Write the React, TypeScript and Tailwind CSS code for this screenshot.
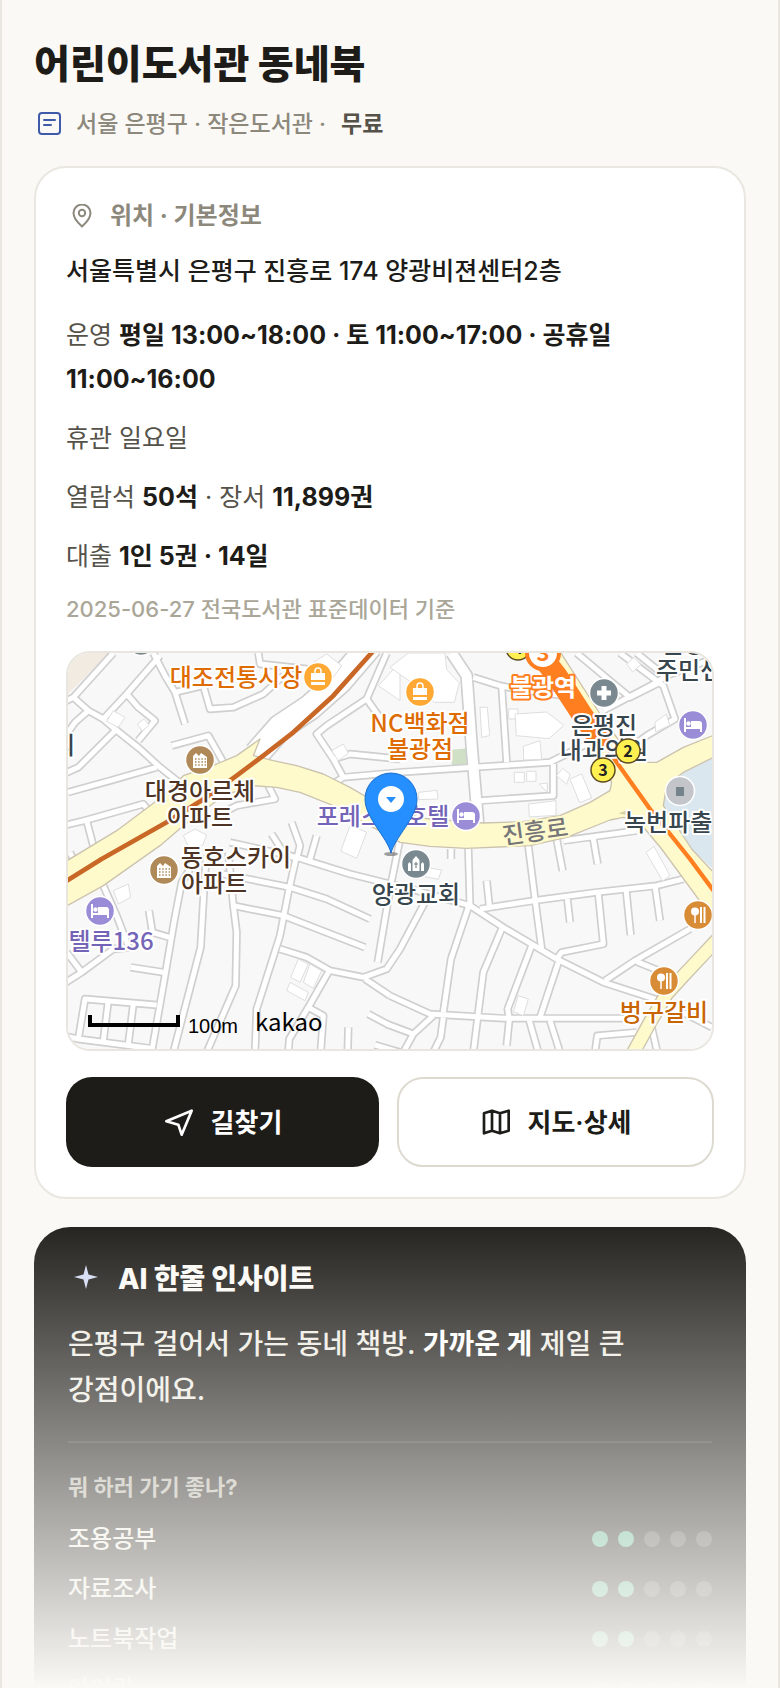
import type { ReactNode } from 'react'

type Kind = 'bag' | 'apartment' | 'hospital' | 'bed' | 'police' | 'food' | 'church' | 'plain'

interface Label {
  text: string
  x: number
  y: number
  color: string
  start?: boolean
}

// road and area geometry is on a 3x grid, see the transform in MapView
const ROADS = [
  'M40 190L70 175L190 42M70 175L115 215L160 240L195 270L270 330L330 385L400 440',
  'M40 300L75 250L115 215',
  'M160 240L230 165L330 50',
  'M40 405L85 385L195 275',
  'M230 165L265 205L315 245L265 305',
  'M310 42L345 110L375 160L405 255M375 160L460 140L480 210L550 205L640 165L700 110',
  'M54 460L180 425L320 385',
  'M365 320L475 290L520 370',
  'M40 560L110 543L280 495L315 540M110 545L135 640',
  'M1010 42L950 180L830 260L800 285L850 360L880 415M850 360L900 345L1050 360',
  'M840 440L880 415L1050 400L1270 385L1500 370L1640 300',
  'M655 440L675 480L560 500L500 530',
  'M625 42L630 75L770 90L830 130M950 180L1000 250',
  'M725 550L750 620L740 660M665 585L700 640L740 660M800 590L780 660',
  'M1270 115L1350 140L1400 150L1540 170M1355 140L1370 370',
  'M1510 375L1510 470L1290 485',
  'M1580 42L1740 175L1830 130M1710 42L1840 140L1875 240L1790 290L1720 340',
  'M1660 215L1820 130L1850 110L1986 60M1760 42L1850 115',
  'M1435 620L1455 780L1475 930M1520 600L1538 695M1630 600L1643 675M1540 605L1760 575',
  'M1255 630L1260 800M1203 630L1203 660M1310 725L1318 800',
  'M1290 810L1450 785L1640 760L1820 740L1900 720',
  'M1552 780L1560 850M1645 765L1660 915L1535 940L1520 960',
  'M1728 750L1742 888M1815 740L1830 845',
  'M1665 1025L1755 965L1920 870M1760 968L1850 1005',
  'M1255 805L1203 960L1180 1120M1355 870L1300 1000L1270 1240',
  'M1445 920L1373 1110L1378 1140L1370 1220M1525 970L1470 1135',
  'M1020 1070L1140 1125L1360 1138L1760 1138',
  'M1010 1155L1090 1185L1150 1130M1090 1185L1060 1240',
  'M1180 1135L1172 1195L1150 1240M1438 1145L1465 1240M1500 1145L1530 1240',
  'M1635 1240L1642 1190L1760 1180M1805 1165L1822 1240',
  'M535 640L550 800L560 880L557 1040L470 1240',
  'M470 650L465 700L452 925L370 1240',
  'M420 690L395 730L372 850L345 1010L305 1240',
  'M520 705L720 745L830 780L960 840',
  'M550 800L700 830L945 925',
  'M740 650L715 760L690 890L620 1110L615 1240',
  'M540 610L740 655L900 705L1100 755L1260 800L1360 865L1520 960L1660 1030L1830 1085L1986 1165',
  'M690 930L770 955L840 995L940 1015L1010 990L1050 930L1130 780',
  'M1050 600L1020 750L983 970',
  'M835 1000L775 1105L718 1200L715 1240M775 1105L820 1130L812 1240',
  'M945 1020L1020 1070M955 1125L1020 1160M895 1165L893 1240M975 1218L1050 1240',
  'M85 1200L105 1080L320 1098M40 1190L85 1200L300 1228',
  'M175 1085L160 1205M250 1095L235 1215M242 985L340 1000M297 815L307 880L358 895',
  'M40 1035L95 1000L190 930L240 925M50 940L95 1000M160 740L200 830L240 935M60 640L85 690',
]

const WIDE_ROADS = ['M1205 42L1250 110L1265 320L1285 560', 'M620 345L690 265L780 205L870 125L960 20']

const BUILDINGS = [
  'M190 215l35 20-20 30-35-18z',
  'M262 255l20-15 15 18-20 18z',
  'M400 590l35-20 35 18-12 30-40 10z',
  'M900 560l50 20-30 78-48-22z',
  'M845 335l35-20 15 28-30 22z',
  'M790 70l40-25 45 35-25 35z',
  'M985 140l65-70v115z',
  'M1020 85l55-43h110l5 50 38 40-15 58h-60l-40-40z',
  'M1290 205h22l7 85-24 5z',
  'M1376 210h28v30h-28z',
  'M1395 225l95-6 52 40-45 40-98-9z',
  'M1420 322l50-17 5 56-54 2z',
  'M1393 400h30v30h-30zM1430 397h28v30h-28z',
  'M1436 495l82-10v44l-80 5z',
  'M1560 420l35-15 30 72-36 14z',
  'M1520 410l18-22 22 18-10 30z',
  'M1468 435l24-3v28z',
  'M1106 460l55-6 3 26-58 2z',
  'M1730 75l22-20 20 22-24 22z',
  'M1815 250l34-25 10 34-42 20z',
  'M745 960l30 15-25 55-28-15z',
  'M780 975l35 20-25 53-30-18z',
  'M720 1030l55 30-10 25-55-30z',
  'M190 755l45-20 7 40-37 20z',
  'M1405 1070l30 10-15 50-30-12z',
  'M1125 685l50 8-10 28-40-8z',
  'M1788 640l24-18 48 88-22 16z',
]

const LABELS: Label[] = [
  { text: '대조전통시장', x: 168, y: 33, color: '#df6c02' },
  { text: '대경아르체', x: 132, y: 147, color: '#4e3424' },
  { text: '아파트', x: 132, y: 173, color: '#4e3424' },
  { text: '동호스카이', x: 168, y: 213, color: '#4e3424' },
  { text: '아파트', x: 146, y: 239, color: '#4e3424' },
  { text: '텔루136', x: 43, y: 297, color: '#7464b7' },
  { text: '리', x: -15, y: 101, color: '#37454d', start: true },
  { text: 'NC백화점', x: 352, y: 79, color: '#df6c02' },
  { text: '불광점', x: 352, y: 105, color: '#df6c02' },
  { text: '포레스트호텔', x: 315, y: 172, color: '#7464b7' },
  { text: '은평진', x: 536, y: 81, color: '#37454d' },
  { text: '내과의원', x: 536, y: 106, color: '#37454d' },
  { text: '불광1동', x: 594, y: 0, color: '#37454d', start: true },
  { text: '주민센터', x: 588, y: 26, color: '#37454d', start: true },
  { text: '녹번파출소', x: 556, y: 178, color: '#37454d', start: true },
  { text: '양광교회', x: 348, y: 250, color: '#37454d' },
  { text: '벙구갈비', x: 596, y: 368, color: '#c96500' },
]

const POIS: { kind: Kind; x: number; y: number }[] = [
  { kind: 'bag', x: 250, y: 24 },
  { kind: 'bag', x: 352, y: 39 },
  { kind: 'apartment', x: 132, y: 107 },
  { kind: 'apartment', x: 96, y: 217 },
  { kind: 'hospital', x: 536, y: 40 },
  { kind: 'bed', x: 625, y: 72 },
  { kind: 'bed', x: 398, y: 163 },
  { kind: 'bed', x: 32, y: 258 },
  { kind: 'police', x: 612, y: 138 },
  { kind: 'food', x: 630, y: 262 },
  { kind: 'food', x: 596, y: 328 },
  { kind: 'church', x: 348, y: 211 },
  { kind: 'plain', x: 73, y: -12 },
]

const POI_COLOR: Record<Kind, string> = {
  bag: '#ffa834',
  apartment: '#af8957',
  hospital: '#7a888f',
  bed: '#9b8cd7',
  police: '#c3c5ca',
  food: '#d98c36',
  church: '#7a888f',
  plain: '#7a888f',
}

const POI_SHAPE: Record<Kind, ReactNode> = {
  bag: (
    <>
      <path d="M-7-4H7V3H-7zM-7 5H7V8H-7z" fill="#fff" />
      <path d="M-3-4v-2a3 3 0 0 1 6 0v2" fill="none" stroke="#fff" strokeWidth="1.5" />
    </>
  ),
  apartment: (
    <>
      <path d="M-7 8V-4l3-3 3 3 2-3 3 2 3 2V8z" fill="#fff" />
      <path d="M-5-1H6M-5 2H6M-5 5H6" stroke="#af8957" strokeWidth="1.5" strokeDasharray="1.5 1.7" />
    </>
  ),
  hospital: <path d="M-2.5-7h5v4.5H7v5H2.5V7h-5V2.5H-7v-5h4.5z" fill="#fff" />,
  bed: (
    <>
      <path d="M-8-7V7M-8 3H8M8 7V0" stroke="#fff" strokeWidth="2" />
      <path d="M-2-4H6a3 3 0 0 1 3 3V3H-2z" fill="#fff" />
      <circle cx="-4.5" cy="-1.5" r="2.2" fill="#fff" />
    </>
  ),
  police: <path d="M-4-4H4V5H-4z" fill="#74838a" />,
  food: (
    <>
      <circle cx="-3" cy="-3.5" r="4" fill="#fff" />
      <path d="M-3-1V8" stroke="#fff" strokeWidth="1.5" />
      <path d="M3-8V8M6.5-8V8" stroke="#fff" strokeWidth="2" />
    </>
  ),
  church: (
    <>
      <path d="M-3.5 7V-4L0-8l3.5 4V7zM-8 7V0l1.5-2L-5 0V7zM5 7V0l1.5-2L8 0V7z" fill="#fff" />
      <path d="M0-2V4M-2 0H2" stroke="#7a888f" strokeWidth="1.2" />
    </>
  ),
  plain: null,
}

function ExitBadge({ x, y, n }: { x: number; y: number; n: number }) {
  return (
    <g transform={`translate(${x} ${y})`}>
      <circle r="12" fill="#fff052" stroke="#5d4b22" strokeWidth="1.5" />
      <text y="6" textAnchor="middle" className="text-[16px] font-bold" fill="#222">{n}</text>
    </g>
  )
}

function MapView() {
  return (
    <div className="mt-6 overflow-hidden rounded-3xl border-2 border-[#e9e6e0]">
      <svg
        viewBox="0 0 644 396"
        preserveAspectRatio="xMidYMid slice"
        className="block h-[396px] w-full bg-[#f8f8f8] font-['Noto_Sans_CJK_KR',sans-serif]"
        role="img"
        aria-label="어린이도서관 동네북 지도"
      >
        <g transform="scale(.33333) translate(-54 -42)" strokeLinejoin="round">
          <path d="M40 30H190L54 165z" fill="#f1ebe2" />
          <path d="M1205 332l48-4 2 50-50 4z" fill="#cfe0c6" />
          <path d="M2000 340L1900 400L1850 440L1840 500L1925 630L2000 700z" fill="#dbe7ef" />
          <g fill="none" stroke="#cfcfcf">
            {ROADS.map(d => <path key={d} d={d} strokeWidth="25" />)}
            <path d={WIDE_ROADS[0]} strokeWidth="40" />
            <path d={WIDE_ROADS[1]} strokeWidth="82" />
          </g>
          <g fill="none" stroke="#fff">
            {ROADS.map(d => <path key={d} d={d} strokeWidth="15" />)}
            <path d={WIDE_ROADS[0]} strokeWidth="30" />
            <path d={WIDE_ROADS[1]} strokeWidth="72" />
          </g>
          <g fill="#fff" stroke="#dedede" strokeWidth="3">
            {BUILDINGS.map(d => <path key={d} d={d} />)}
          </g>
          <path d="M2010 893L1900 1010L1850 1065L1800 1150L1745 1250" fill="none" stroke="#cbc3ae" strokeWidth="44" />
          <path
            d="M30 678L200 575L340 470L400 410L500 375L560 350L630 300L610 350L670 365L740 380L820 405L900 445L960 480L1040 515L1120 538L1300 552L1420 548L1530 530L1620 490L1680 455L1685 430L1660 380L1620 300L1475 95L1440 30H1525L1660 240L1725 330L1765 370H1820L1900 325L2000 285V350L1900 400L1850 440L1840 500L1925 630L2000 710V855L1835 630L1760 540L1720 535L1680 543L1550 595L1440 620L1250 628L1140 622L1050 610L960 560L850 500L750 460L680 445L610 440L520 470L400 560L330 620L160 740L30 812z"
            fill="#fffacc"
            stroke="#cbc3ae"
            strokeWidth="4"
          />
          <path d="M2010 893L1900 1010L1850 1065L1800 1150L1745 1250" fill="none" stroke="#fffacc" strokeWidth="36" />
          <path d="M1705 523l30-10-8 16 22 3z" fill="#d8cfa8" />
          <path d="M30 738L155 660L350 550L470 475L560 410L640 350L730 280L850 170L975 30" fill="none" stroke="#c96727" strokeWidth="14" />
          <path d="M1465 40L1520 110L1595 225L1665 325" fill="none" stroke="#ff7e20" strokeWidth="64" />
          <path d="M1650 290L1700 370L1800 510L1920 660L2000 768" fill="none" stroke="#ff7e20" strokeWidth="13" />
        </g>

        {POIS.map(p => (
          <g key={`${p.x}-${p.y}`} transform={`translate(${p.x} ${p.y})`}>
            <circle r="14.5" fill={POI_COLOR[p.kind]} stroke="#fff" strokeWidth="1.5" />
            {POI_SHAPE[p.kind]}
          </g>
        ))}

        <g className="text-[24px] font-medium" stroke="#fff" strokeWidth="4" strokeLinejoin="round" paintOrder="stroke">
          {LABELS.map(l => (
            <text key={`${l.text}-${l.y}`} x={l.x} y={l.y} fill={l.color} textAnchor={l.start ? 'start' : 'middle'}>{l.text}</text>
          ))}
          <text x="467" y="187" fill="#76767a" stroke="#fffacc" textAnchor="middle" transform="rotate(-8 467 178)">진흥로</text>
        </g>

        <ExitBadge x={450} y={-5} n={4} />
        <circle cx="475" cy="0" r="16" fill="#fff" stroke="#ff7e20" strokeWidth="4" />
        <text x="475" y="8" textAnchor="middle" className="text-[22px] font-bold" fill="#ff7e20">3</text>
        <text x="475" y="43" textAnchor="middle" className="text-[24px] font-bold" fill="#fff" stroke="#ff7e20" strokeWidth="4" strokeLinejoin="round" paintOrder="stroke">불광역</text>
        <ExitBadge x={535} y={117} n={3} />
        <ExitBadge x={560} y={98} n={2} />

        <ellipse cx="323" cy="201" rx="7" ry="2" fill="#777" opacity=".7" />
        <path d="M323 200C319 184 297 165 297 146a26 26 0 1 1 52 0c0 19-22 38-26 54z" fill="#258fff" stroke="#1b6fd0" />
        <circle cx="323" cy="146" r="13" fill="#fff" />
        <path d="M318 144h10l-5 6z" fill="#258fff" />

        <path d="M22 362v10h88v-10" fill="none" stroke="#000" strokeWidth="4" />
        <text x="120" y="380" className="font-['Liberation_Sans',sans-serif] text-[20px]">100m</text>
        <text x="187" y="378" className="text-[24px]">kakao</text>
      </svg>
    </div>
  )
}

function Score({ label, value }: { label: string; value: number }) {
  return (
    <li className="flex h-[50px] items-center justify-between">
      <span className="text-[24px] font-medium text-[#f3f1ea]">{label}</span>
      <span className="flex gap-[10px]" role="img" aria-label={`${value}/5`}>
        {[1, 2, 3, 4, 5].map(i => (
          <span key={i} className={i <= value ? 'size-4 rounded-full bg-[#5cb593]' : 'size-4 rounded-full bg-white/20'} />
        ))}
      </span>
    </li>
  )
}

const SCORES = [
  { label: '조용공부', value: 2 },
  { label: '자료조사', value: 2 },
  { label: '노트북작업', value: 2 },
  { label: '아이랑', value: 5 },
]

export default function App() {
  return (
    <div className="relative h-screen overflow-hidden border-x-2 border-[#e9e7e0] bg-[#faf9f5] px-8 pt-9 font-['Inter','Noto_Sans_CJK_KR',sans-serif] break-keep text-[#1d1c18]">
      <h1 className="text-[39px] leading-[56px] font-extrabold">어린이도서관 동네북</h1>
      <p className="mt-3 flex h-10 items-center text-[23px] font-medium text-[#8c887c]">
        <svg viewBox="0 0 24 24" className="ml-[3px] size-6" fill="none" stroke="#3f5aa8" strokeWidth="2" strokeLinecap="round" aria-hidden="true">
          <rect x="2" y="1" width="21" height="21" rx="3" />
          <path d="M7 8h11M7 13h7" />
        </svg>
        <span className="ml-[15px]">서울 은평구 · 작은도서관 ·</span>
        <b className="ml-[15px] font-semibold text-[#55524a]">무료</b>
      </p>

      <section className="mt-[22px] rounded-[32px] border-2 border-[#e9e7e0] bg-white p-[30px]">
        <h2 className="flex h-9 items-center text-[24px] font-bold text-[#8c887c]">
          <svg viewBox="0 0 24 24" className="ml-1 size-6" fill="none" stroke="currentColor" strokeWidth="2" aria-hidden="true">
            <path d="M12 22.5C7 18 3.500 13.500 3.500 9a8.500 8.500 0 0 1 17 0C20.500 13.500 17 18 12 22.5z" />
            <circle cx="12" cy="9" r="3.2" />
          </svg>
          <span className="ml-4">위치 · 기본정보</span>
        </h2>
        <p className="mt-4 text-[25px] leading-[42px] font-medium">서울특별시 은평구 진흥로 174 양광비젼센터2층</p>
        <div className="mt-[21px] flex flex-col gap-[15px] text-[25px] leading-[44px] text-[#55524a] [&_b]:font-bold [&_b]:text-[#1d1c18]">
          <p>운영 <b>평일 13:00~18:00 · 토 11:00~17:00 · 공휴일 11:00~16:00</b></p>
          <p>휴관 일요일</p>
          <p>열람석 <b>50석</b> · 장서 <b>11,899권</b></p>
          <p>대출 <b>1인 5권 · 14일</b></p>
        </div>
        <p className="mt-[13px] text-[22px] leading-9 font-medium text-[#aaa698]">2025-06-27 전국도서관 표준데이터 기준</p>

        <MapView />

        <div className="mt-[26px] flex gap-[18px] text-[26px] font-semibold">
          <button type="button" className="flex h-[90px] flex-1 items-center justify-center gap-4 rounded-[26px] bg-[#1d1c18] text-white">
            <svg viewBox="0 0 24 24" className="size-8" fill="none" stroke="currentColor" strokeWidth="2" strokeLinejoin="round" aria-hidden="true">
              <path d="M2.5 11.500L21.500 3.500L14 21.500L11.500 14z" />
            </svg>
            길찾기
          </button>
          <button type="button" className="flex h-[90px] flex-1 items-center justify-center gap-4 rounded-[26px] border-2 border-[#dddad0] bg-white">
            <svg viewBox="0 0 24 24" className="size-8" fill="none" stroke="currentColor" strokeWidth="2" strokeLinejoin="round" aria-hidden="true">
              <path d="M3 5.500L9 3.500l6 2 6.500-2v15L15 20.500l-6-2-6 2zM9 3.500v15M15 5.500v15" />
            </svg>
            지도·상세
          </button>
        </div>
      </section>

      <section className="mt-7 rounded-[36px] bg-[#1d1c18] px-[34px] py-8">
        <h2 className="flex h-10 items-center text-[28px] font-extrabold text-[#fbfaf6]">
          <svg viewBox="0 0 24 24" className="mb-1 ml-[6px] size-6" fill="#d3daf5" aria-hidden="true">
            <path d="M12 0L14.500 9.500L24 12L14.500 14.500L12 24L9.500 14.500L0 12L9.500 9.500z" />
          </svg>
          <span className="ml-5">AI 한줄 인사이트</span>
        </h2>
        <p className="mt-[22px] text-[28px] leading-[46px] font-medium text-[#efede5]">
          은평구 걸어서 가는 동네 책방. <b className="font-bold text-white">가까운 게</b> 제일 큰 강점이에요.
        </p>
        <h3 className="mt-7 border-t-2 border-white/10 pt-[26px] text-[22px] leading-9 font-bold text-[#b7b4aa]">뭐 하러 가기 좋나?</h3>
        <ul className="mt-[9px]">
          {SCORES.map(s => <Score key={s.label} {...s} />)}
        </ul>
      </section>

      <div className="pointer-events-none absolute -inset-x-0.5 bottom-0 h-[480px] bg-linear-to-b from-[#faf9f5]/0 to-[#faf9f5]" />
    </div>
  )
}
